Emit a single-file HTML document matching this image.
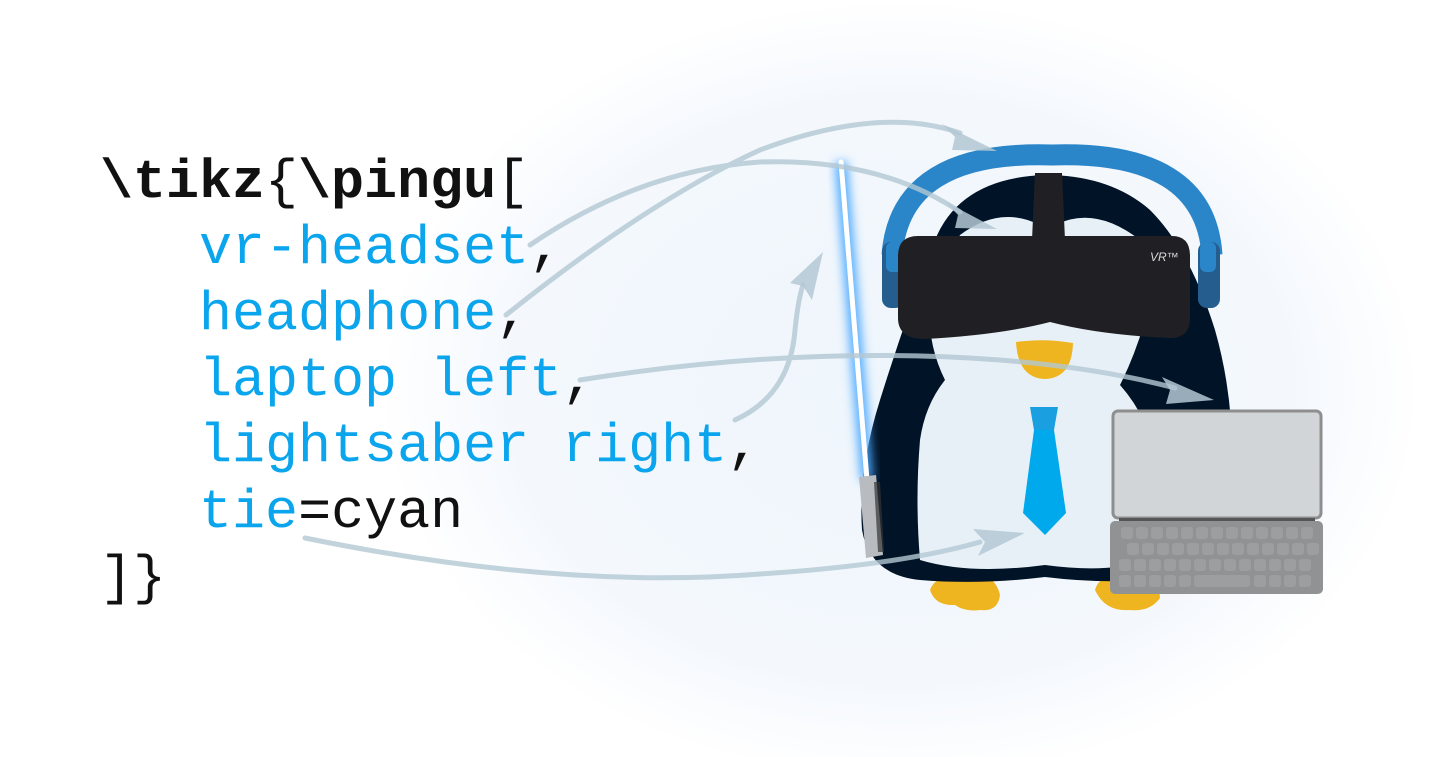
<!DOCTYPE html>
<html><head><meta charset="utf-8"><style>
html,body{margin:0;padding:0;background:#fff;width:1431px;height:757px;overflow:hidden}
svg{position:absolute;left:0;top:0}
.code{position:absolute;left:100px;top:150px;font-family:"Liberation Mono","DejaVu Sans Mono",monospace;font-size:55px;line-height:66px;white-space:pre;color:#111;letter-spacing:0px}
.b{color:#0aa5ec}.k{font-weight:bold}
</style></head><body>
<svg width="1431" height="757" viewBox="0 0 1431 757">
<defs>
<radialGradient id="bg" cx="900" cy="390" r="520" gradientUnits="userSpaceOnUse" gradientTransform="translate(900 390) scale(1 0.75) translate(-900 -390)">
<stop offset="0" stop-color="#eef5fc"/><stop offset="0.75" stop-color="#f4f8fd"/><stop offset="1" stop-color="#ffffff"/></radialGradient>
<filter id="glow" x="-50%" y="-10%" width="200%" height="120%"><feGaussianBlur stdDeviation="5"/></filter>
</defs>
<rect width="1431" height="757" fill="#fff"/>
<ellipse cx="900" cy="390" rx="540" ry="400" fill="url(#bg)"/>
<!-- feet -->
<path d="M930 590 Q935 575 965 572 Q995 572 1000 595 Q998 612 980 610 Q965 612 955 605 Q935 606 930 590Z" fill="#efb521"/>
<path d="M1095 590 Q1100 572 1130 572 Q1160 578 1160 598 Q1150 612 1130 610 Q1105 612 1095 590Z" fill="#efb521"/>
<!-- body -->
<path d="M1045 175 Q960 178 935 240 Q905 320 880 400 Q858 470 862 530 Q870 575 920 580 Q980 585 1045 577 Q1110 585 1170 578 Q1225 560 1232 480 Q1235 400 1215 330 Q1190 250 1150 210 Q1110 175 1045 175Z" fill="#011427"/>
<!-- face/belly -->
<path d="M960 235 Q1000 205 1040 225 L1055 225 Q1095 205 1140 240 L1150 300 Q1140 345 1120 385 Q1160 430 1160 500 L1160 555 Q1120 575 1045 565 Q970 575 920 560 Q915 500 920 440 Q925 405 945 380 Q925 340 930 290Z" fill="#e8f0f7"/>
<!-- headphone band -->
<path d="M892 255 Q900 150 1052 155 Q1205 150 1212 255" fill="none" stroke="#2a86c8" stroke-width="21"/>
<rect x="882" y="242" width="22" height="66" rx="9" fill="#265d8f"/>
<rect x="1198" y="242" width="22" height="66" rx="9" fill="#265d8f"/>
<rect x="886" y="242" width="16" height="30" rx="6" fill="#2a86c8"/>
<rect x="1200" y="242" width="16" height="30" rx="6" fill="#2a86c8"/>
<!-- strap -->
<path d="M1035 173 L1062 173 L1065 240 L1032 240Z" fill="#202024"/>
<!-- VR -->
<path d="M918 236 L1172 236 Q1190 236 1190 256 L1190 318 Q1190 338 1170 338 Q1100 335 1050 322 Q1000 335 925 339 Q898 339 898 318 L898 256 Q898 236 918 236Z" fill="#202024"/>
<text x="1150" y="261" font-family="Liberation Sans,sans-serif" font-style="italic" font-size="12" fill="#d8d8d8">VR™</text>
<!-- beak -->
<path d="M1016 342 Q1045 338 1073 343 Q1072 378 1045 379 Q1018 378 1016 342Z" fill="#efb521"/>
<!-- tie -->
<path d="M1030 407 L1058 407 L1054 430 L1034 430Z" fill="#1a9fe0"/>
<path d="M1034 430 L1054 430 L1066 513 L1045 535 L1023 513Z" fill="#00a8ec"/>
<!-- lightsaber -->
<line x1="841" y1="162" x2="867" y2="480" stroke="#4aa8ff" stroke-width="12" filter="url(#glow)"/>
<line x1="841" y1="162" x2="867" y2="480" stroke="#ffffff" stroke-width="5" stroke-linecap="round"/>
<path d="M859 477 L876 475 L883 555 L866 558Z" fill="#b8bcc0"/>
<path d="M874 482 L880 482 L884 552 L878 552Z" fill="#333" opacity="0.7"/>
<!-- laptop -->
<rect x="1113" y="411" width="208" height="107" rx="5" fill="#d1d5d8" stroke="#8e8e8e" stroke-width="3"/>
<rect x="1119" y="518" width="196" height="5" fill="#555"/>
<rect x="1110" y="521" width="213" height="73" rx="5" fill="#909293"/>
<g fill="#9c9ea0">
<g id="r1"><rect x="1121" y="527" width="12" height="12" rx="3"/><rect x="1136" y="527" width="12" height="12" rx="3"/><rect x="1151" y="527" width="12" height="12" rx="3"/><rect x="1166" y="527" width="12" height="12" rx="3"/><rect x="1181" y="527" width="12" height="12" rx="3"/><rect x="1196" y="527" width="12" height="12" rx="3"/><rect x="1211" y="527" width="12" height="12" rx="3"/><rect x="1226" y="527" width="12" height="12" rx="3"/><rect x="1241" y="527" width="12" height="12" rx="3"/><rect x="1256" y="527" width="12" height="12" rx="3"/><rect x="1271" y="527" width="12" height="12" rx="3"/><rect x="1286" y="527" width="12" height="12" rx="3"/><rect x="1301" y="527" width="12" height="12" rx="3"/></g>
<use href="#r1" transform="translate(6 16)"/>
<use href="#r1" transform="translate(-2 32)"/>
<rect x="1119" y="575" width="12" height="12" rx="3"/><rect x="1134" y="575" width="12" height="12" rx="3"/><rect x="1149" y="575" width="12" height="12" rx="3"/><rect x="1164" y="575" width="12" height="12" rx="3"/><rect x="1179" y="575" width="12" height="12" rx="3"/><rect x="1194" y="575" width="56" height="12" rx="3"/><rect x="1254" y="575" width="12" height="12" rx="3"/><rect x="1269" y="575" width="12" height="12" rx="3"/><rect x="1284" y="575" width="12" height="12" rx="3"/><rect x="1299" y="575" width="12" height="12" rx="3"/>
</g>
<!-- arrows -->
<g fill="none" stroke="#b3c8d3" stroke-width="5" stroke-linecap="round" opacity="0.8">
<path d="M530 245 Q640 170 760 162 Q880 158 960 212"/>
<path d="M506 315 Q650 200 760 150 Q880 105 960 133"/>
<path d="M580 380 Q800 345 1000 360 Q1100 368 1175 388"/>
<path d="M735 420 Q790 395 795 330 Q798 300 803 285"/>
<path d="M305 538 Q560 590 760 574 Q900 565 980 542"/>
</g>
<g fill="#b3c8d3" opacity="0.85">
<polygon points="997,151 942,124 955,137 952,150"/>
<polygon points="997,229 946,202 958,215 955,228"/>
<polygon points="1214,400 1162,377 1170,390 1166,404"/>
<polygon points="823,252 790,283 803,286 812,300"/>
<polygon points="1025,533 973,529 985,542 978,556"/>
</g>
</svg>
<div class="code"><span class="k">\tikz</span>{<span class="k">\pingu</span>[
   <span class="b">vr-headset</span>,
   <span class="b">headphone</span>,
   <span class="b">laptop left</span>,
   <span class="b">lightsaber right</span>,
   <span class="b">tie</span>=cyan
]}</div>
</body></html>
